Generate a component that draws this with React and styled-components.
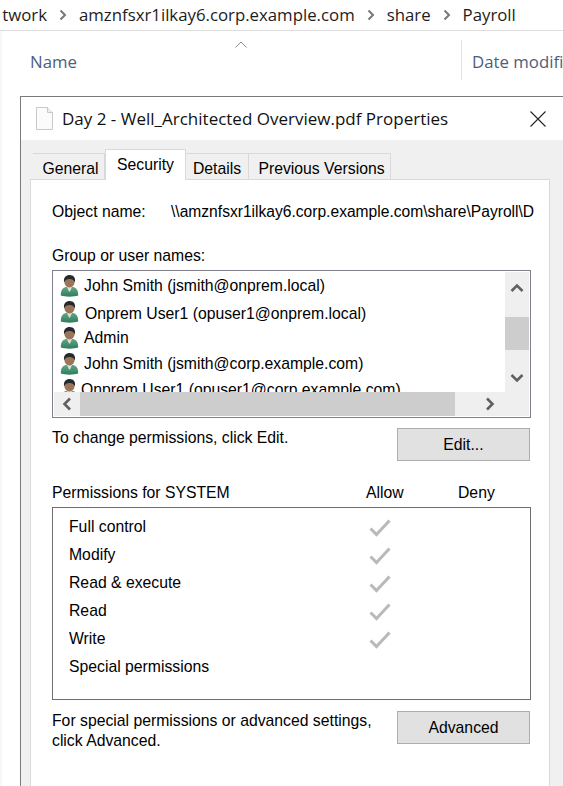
import React from "react";
import styled, { createGlobalStyle } from "styled-components";

const GlobalStyle = createGlobalStyle`
  html, body {
    margin: 0;
    padding: 0;
    height: 786px;
    overflow: hidden;
    background: #fff;
  }
  #root {
    height: 786px;
  }
`;

const users = [
  { name: "John Smith (jsmith@onprem.local)", textX: 0, textY: 0 },
  { name: "Onprem User1 (opuser1@onprem.local)", textX: 1, textY: 4 },
  { name: "Admin", textX: 0, textY: 0 },
  { name: "John Smith (jsmith@corp.example.com)", textX: 0, textY: 0 },
  { name: "Onprem User1 (opuser1@corp.example.com)", textX: -3, textY: 0 },
];

const permissions = [
  { name: "Full control", allowed: true },
  { name: "Modify", allowed: true },
  { name: "Read & execute", allowed: true },
  { name: "Read", allowed: true },
  { name: "Write", allowed: true },
  { name: "Special permissions", allowed: false },
];

const tabs = [
  { label: "General", width: 72, shift: 4 },
  { label: "Security", width: 81, active: true, shift: 0 },
  { label: "Details", width: 63, shift: 0 },
  { label: "Previous Versions", width: 142, shift: 4 },
];

const Crumb = () => (
  <svg width="10" height="12" viewBox="0 0 10 12">
    <path d="M2.5 1.5 L7 6 L2.5 10.5" fill="none" stroke="#777" strokeWidth="2" />
  </svg>
);

const FileIcon = () => (
  <svg width="17" height="23" viewBox="0 0 17 23">
    <path d="M.5.5 H11.5 L16.5 5.5 V22.5 H.5 Z" fill="#fbfbfb" stroke="#c8c8c8" />
    <path d="M11.5.5 V5.5 H16.5" fill="#eee" stroke="#c8c8c8" />
  </svg>
);

const CloseIcon = () => (
  <svg width="16" height="16" viewBox="0 0 16 16">
    <path d="M.5.5 L15.5 15.5 M15.5.5 L.5 15.5" stroke="#222" strokeWidth="1.1" />
  </svg>
);

const UserIcon = () => (
  <svg width="19" height="22" viewBox="0 0 19 22">
    <defs>
      <linearGradient id="shirt" x1="0" y1="0" x2="0" y2="1">
        <stop offset="0" stopColor="#5fa98a" />
        <stop offset="1" stopColor="#2f7d5e" />
      </linearGradient>
    </defs>
    <path d="M.8 20.5 C.8 15 2.5 12.8 6.5 11.8 H12.5 C16.5 12.8 18.2 15 18.2 20.5 C14 22 5 22 .8 20.5 Z" fill="url(#shirt)" />
    <path d="M6.8 11.5 H12.2 L10 16.5 H9 Z" fill="#e6ddd2" />
    <ellipse cx="9.5" cy="6.6" rx="5.2" ry="6" fill="#9c7458" />
    <path d="M4.1 7.2 C3.2 2 6.4 0 9.6 0 C13.6 0 15.8 2.8 14.9 7.2 C13.8 4.8 11.6 3.8 9.2 4 C7 4.2 5.2 5 4.1 7.2 Z" fill="#26292c" />
  </svg>
);

const Arrow = ({ d }) => (
  <svg width="14" height="14" viewBox="0 0 14 14">
    <path d={d} fill="none" stroke="#606060" strokeWidth="2.6" />
  </svg>
);

const Check = () => (
  <svg width="22" height="18" viewBox="0 0 22 18">
    <path d="M1.5 9.5 L7.5 15.5 L20.5 1.5" fill="none" stroke="#b9b9b9" strokeWidth="3" />
  </svg>
);

export default function App() {
  return (
    <Page>
      <GlobalStyle />
      <AddressBar>
        <FirstCrumb>twork</FirstCrumb>
        <Crumb />
        <CrumbText>amznfsxr1ilkay6.corp.example.com</CrumbText>
        <Crumb />
        <CrumbText>share</CrumbText>
        <Crumb />
        <CrumbText>Payroll</CrumbText>
      </AddressBar>

      <ColumnHeaders>
        <NameColumn>
          <SortCaret>
            <svg width="12" height="7" viewBox="0 0 12 7">
              <path d="M.5 6.5 L6 1 L11.5 6.5" fill="none" stroke="#8a8a8a" />
            </svg>
          </SortCaret>
          <ColumnLabel>Name</ColumnLabel>
        </NameColumn>
        <DateColumn>
          <ColumnLabel>Date modifi</ColumnLabel>
        </DateColumn>
      </ColumnHeaders>

      <Dialog>
        <TitleBar>
          <FileIcon />
          <Title>Day 2 - Well_Architected Overview.pdf Properties</Title>
          <CloseButton>
            <CloseIcon />
          </CloseButton>
        </TitleBar>

        <DialogBody>
          <TabRow>
            {tabs.map((tab) => (
              <Tab key={tab.label} $active={tab.active} $width={tab.width} $shift={tab.shift}>
                {tab.label}
              </Tab>
            ))}
          </TabRow>

          <Panel>
            <ObjectRow>
              <ObjectLabel>Object name:</ObjectLabel>
              <ObjectValue>
                \\amznfsxr1ilkay6.corp.example.com\share\Payroll\D
              </ObjectValue>
            </ObjectRow>

            <GroupLabel>Group or user names:</GroupLabel>
            <ListBox>
              <UserList>
                {users.map((user) => (
                  <UserRow key={user.name}>
                    <UserIcon />
                    <UserName $x={user.textX} $y={user.textY}>
                      {user.name}
                    </UserName>
                  </UserRow>
                ))}
              </UserList>
              <VScroll>
                <VArrowCell $align="flex-start" $pad="9px 0 0">
                  <Arrow d="M1.5 10 L7 4.5 L12.5 10" />
                </VArrowCell>
                <VThumb />
                <VArrowCell $align="flex-end" $pad="0 0 7px">
                  <Arrow d="M1.5 4 L7 9.5 L12.5 4" />
                </VArrowCell>
              </VScroll>
              <HScroll>
                <HLeftCell>
                  <Arrow d="M10 1.5 L4.5 7 L10 12.5" />
                </HLeftCell>
                <HThumb />
                <HRightCell>
                  <Arrow d="M4 1.5 L9.5 7 L4 12.5" />
                </HRightCell>
              </HScroll>
            </ListBox>

            <ActionRow $top={10}>
              <ActionText>To change permissions, click Edit.</ActionText>
              <ActionButton>Edit...</ActionButton>
            </ActionRow>

            <PermHeader>
              <PermTitle>Permissions for SYSTEM</PermTitle>
              <AllowHead>Allow</AllowHead>
              <DenyHead>Deny</DenyHead>
            </PermHeader>

            <PermBox>
              {permissions.map((perm) => (
                <PermRow key={perm.name}>
                  <PermName>{perm.name}</PermName>
                  <PermCheck>{perm.allowed && <Check />}</PermCheck>
                </PermRow>
              ))}
            </PermBox>

            <ActionRow $top={11}>
              <ActionText>
                For special permissions or advanced settings,
                <br />
                click Advanced.
              </ActionText>
              <ActionButton>Advanced</ActionButton>
            </ActionRow>
          </Panel>
        </DialogBody>
      </Dialog>
    </Page>
  );
}

const Page = styled.div`
  width: 563px;
  height: 786px;
  overflow: hidden;
  display: flex;
  flex-direction: column;
  background: #fff;
  box-shadow: inset 2px 0 0 #f7f7f7;
  font-family: "Liberation Sans", Arial, sans-serif;
  font-size: 15.75px;
  color: #000;
`;

const AddressBar = styled.div`
  flex: none;
  display: flex;
  align-items: center;
  gap: 11px;
  padding-bottom: 1px;
  box-sizing: border-box;
  height: 31px;
  background: #fff;
  border-bottom: 1px solid #dcdcdc;
`;

const CrumbText = styled.span`
  font-family: "Open Sans", sans-serif;
  font-size: 16.8px;
  color: #1c1c1c;
  white-space: nowrap;
`;

const FirstCrumb = styled(CrumbText)`
  width: 47px;
  text-align: right;
`;

const ColumnHeaders = styled.div`
  height: 65px;
  flex: none;
  display: flex;
`;

const NameColumn = styled.div`
  flex: none;
  width: 442px;
  margin: 9px 0 0 20px;
  height: 40px;
  box-sizing: border-box;
  border-right: 1px solid #e3e3e3;
  display: flex;
  flex-direction: column;
`;

const SortCaret = styled.div`
  height: 7px;
  line-height: 0;
  margin-top: 1px;
  text-align: center;
  margin-bottom: 3px;
`;

const DateColumn = styled.div`
  flex: none;
  padding: 20px 0 0 10px;
`;

const ColumnLabel = styled.div`
  font-family: "Open Sans", sans-serif;
  font-size: 16.8px;
  line-height: 22px;
  color: #4c607a;
  white-space: nowrap;
  ${NameColumn} & {
    margin-left: 10px;
  }
`;

const Dialog = styled.div`
  flex: 1;
  margin-left: 20px;
  width: 544px;
  box-sizing: border-box;
  border: 1px solid #7a7a7a;
  border-bottom: 0;
  display: flex;
  flex-direction: column;
  background: #f0f0f0;
`;

const TitleBar = styled.div`
  height: 43px;
  flex: none;
  background: #fff;
  display: flex;
  align-items: center;
  padding-left: 15px;
`;

const Title = styled.div`
  font-family: "Open Sans", sans-serif;
  font-size: 17px;
  color: #111;
  margin-left: 9px;
  white-space: nowrap;
`;

const CloseButton = styled.div`
  margin-left: auto;
  margin-right: 17px;
  line-height: 0;
`;

const DialogBody = styled.div`
  flex: 1;
  display: flex;
  flex-direction: column;
  padding: 0 13px 0 9px;
`;

const TabRow = styled.div`
  height: 40px;
  flex: none;
  display: flex;
  align-items: flex-end;
  padding-left: 3px;
  position: relative;
  z-index: 1;
  margin-bottom: -1px;
`;

const Tab = styled.div`
  width: ${(p) => p.$width}px;
  height: ${(p) => (p.$active ? 31 : 27)}px;
  box-sizing: border-box;
  flex: none;
  border: 1px solid #d9d9d9;
  border-left-width: ${(p) => (p.$active ? 1 : 0)}px;
  border-bottom: ${(p) => (p.$active ? "0" : "1px solid #d9d9d9")};
  background: ${(p) => (p.$active ? "#fff" : "#f0f0f0")};
  display: flex;
  justify-content: center;
  align-items: ${(p) => (p.$active ? "flex-start" : "center")};
  padding-top: ${(p) => (p.$active ? 6 : 4)}px;
  padding-left: ${(p) => p.$shift}px;
  white-space: nowrap;
`;

const Panel = styled.div`
  flex: 1;
  background: #fff;
  border: 1px solid #d9d9d9;
  border-bottom: 0;
  padding: 22px 20px 0 21px;
  min-height: 0;
`;

const ObjectRow = styled.div`
  display: flex;
  height: 20px;
  line-height: 20px;
  width: 479px;
`;

const ObjectLabel = styled.div`
  width: 119px;
  flex: none;
`;

const ObjectValue = styled.div`
  white-space: nowrap;
  font-size: 15.6px;
`;

const GroupLabel = styled.div`
  margin-top: 24px;
  height: 20px;
  line-height: 20px;
`;

const ListBox = styled.div`
  margin-top: 4px;
  width: 479px;
  height: 148px;
  box-sizing: border-box;
  border: 1px solid #82828c;
  padding: 1px;
  display: grid;
  grid-template-columns: 1fr 24px;
  grid-template-rows: 1fr 24px;
`;

const UserList = styled.div`
  overflow: hidden;
  padding: 1px 0 0 6px;
`;

const UserRow = styled.div`
  height: 26px;
  display: flex;
  align-items: center;
  white-space: nowrap;
`;

const UserName = styled.span`
  margin-left: ${(p) => 5 + p.$x}px;
  margin-top: ${(p) => p.$y}px;
`;

const VScroll = styled.div`
  background: #efefef;
  display: flex;
  flex-direction: column;
`;

const VArrowCell = styled.div`
  flex: 1;
  display: flex;
  justify-content: center;
  align-items: ${(p) => p.$align};
  padding: ${(p) => p.$pad};
`;

const VThumb = styled.div`
  height: 33px;
  flex: none;
  background: #cdcdcd;
`;

const HScroll = styled.div`
  grid-column: 1 / -1;
  background: #efefef;
  display: flex;
`;

const HLeftCell = styled.div`
  width: 26px;
  flex: none;
  display: flex;
  align-items: center;
  justify-content: center;
`;

const HThumb = styled.div`
  width: 375px;
  flex: none;
  background: #cdcdcd;
`;

const HRightCell = styled.div`
  flex: 1;
  display: flex;
  align-items: center;
  justify-content: center;
  padding-right: 4px;
`;

const ActionRow = styled.div`
  margin-top: ${(p) => p.$top}px;
  width: 478px;
  display: flex;
  justify-content: space-between;
  align-items: flex-start;
`;

const ActionText = styled.div`
  line-height: 20px;
`;

const ActionButton = styled.div`
  width: 133px;
  height: 33px;
  box-sizing: border-box;
  flex: none;
  background: #e1e1e1;
  border: 1px solid #adadad;
  display: flex;
  align-items: center;
  justify-content: center;
`;

const PermHeader = styled.div`
  margin-top: 22px;
  display: flex;
  height: 20px;
  line-height: 20px;
  width: 478px;
`;

const PermTitle = styled.div`
  width: 314px;
  flex: none;
`;

const AllowHead = styled.div`
  width: 92px;
  flex: none;
`;

const DenyHead = styled.div`
  flex: none;
`;

const PermBox = styled.div`
  margin-top: 4px;
  width: 479px;
  height: 193px;
  box-sizing: border-box;
  border: 1px solid #6e6e6e;
  padding: 5px 0 0 16px;
`;

const PermRow = styled.div`
  height: 28px;
  display: flex;
  align-items: center;
`;

const PermName = styled.div`
  width: 300px;
  flex: none;
`;

const PermCheck = styled.div`
  line-height: 0;
  padding-top: 2px;
`;
